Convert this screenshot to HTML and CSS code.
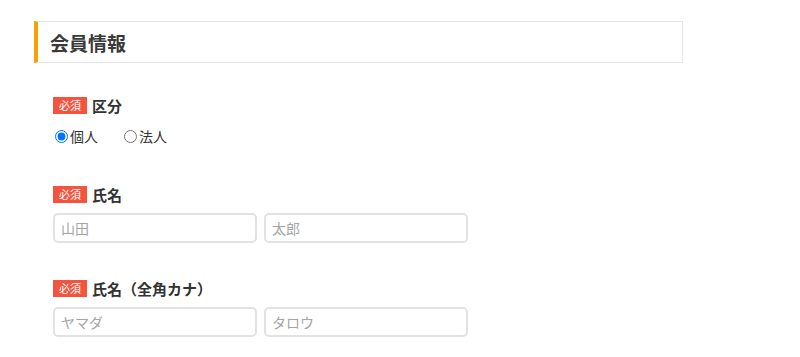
FILE: index.html
```html
<!DOCTYPE html>
<html lang="ja">
<head>
<meta charset="utf-8">
<link rel="stylesheet" href="styles.css">
</head>
<body>
<div class="wrap">
  <div class="section-head"><h2 class="section-title">会員情報</h2></div>
  <form class="form">
    <div class="field">
      <div class="field-label"><span class="badge">必須</span><span class="label-text">区分</span></div>
      <div class="radios">
        <label class="radio"><input type="radio" name="kubun" checked>個人</label>
        <label class="radio"><input type="radio" name="kubun">法人</label>
      </div>
    </div>
    <div class="field">
      <div class="field-label"><span class="badge">必須</span><span class="label-text">氏名</span></div>
      <div class="inputs">
        <input class="text-input" type="text" placeholder="山田">
        <input class="text-input" type="text" placeholder="太郎">
      </div>
    </div>
    <div class="field">
      <div class="field-label"><span class="badge">必須</span><span class="label-text">氏名（全角カナ）</span></div>
      <div class="inputs">
        <input class="text-input" type="text" placeholder="ヤマダ">
        <input class="text-input" type="text" placeholder="タロウ">
      </div>
    </div>
  </form>
</div>
</body>
</html>
```
FILE: styles.css
```css
* { box-sizing: border-box; }
html, body { margin: 0; padding: 0; background: #fff; }
body {
  font-family: "Noto Sans CJK JP", "Noto Sans", sans-serif;
  color: #333;
  font-size: 14px;
}
.wrap { padding: 21px 0 0 34px; }
.section-head {
  width: 649px;
  height: 42px;
  border: 1px solid #e6e6e6;
  border-left: 4px solid #f7a000;
  display: flex;
  align-items: center;
  padding-left: 12px;
}
.section-title {
  margin: 0;
  font-size: 19px;
  font-weight: bold;
  color: #3a3a3a;
  line-height: 1;
}
.form { padding-left: 19px; padding-top: 32px; }
.field { margin-bottom: 35px; }
.field:first-child { margin-bottom: 38px; }
.field-label {
  display: flex;
  align-items: center;
  height: 20px;
}
.badge {
  background: #f4543d;
  color: #fff;
  font-size: 11px;
  height: 17px;
  line-height: 17px;
  padding: 0 6px;
  margin-right: 5px;
}
.label-text { font-size: 15px; font-weight: bold; color: #333; }
.radios {
  display: flex;
  align-items: center;
  height: 20px;
  margin-top: 11px;
  gap: 24px;
}
.radio { display: flex; align-items: center; font-size: 14px; color: #333; }
.radio input { margin: 0 2px 0 2px; width: 13px; height: 13px; }
.inputs { display: flex; gap: 7px; margin-top: 9px; }
.text-input {
  width: 204px;
  height: 30px;
  border: 2px solid #e2e2e2;
  border-radius: 5px;
  padding: 0 6px;
  font-family: inherit;
  font-size: 14px;
  outline: none;
}
.text-input::placeholder { color: #a5a5a5; }
```
